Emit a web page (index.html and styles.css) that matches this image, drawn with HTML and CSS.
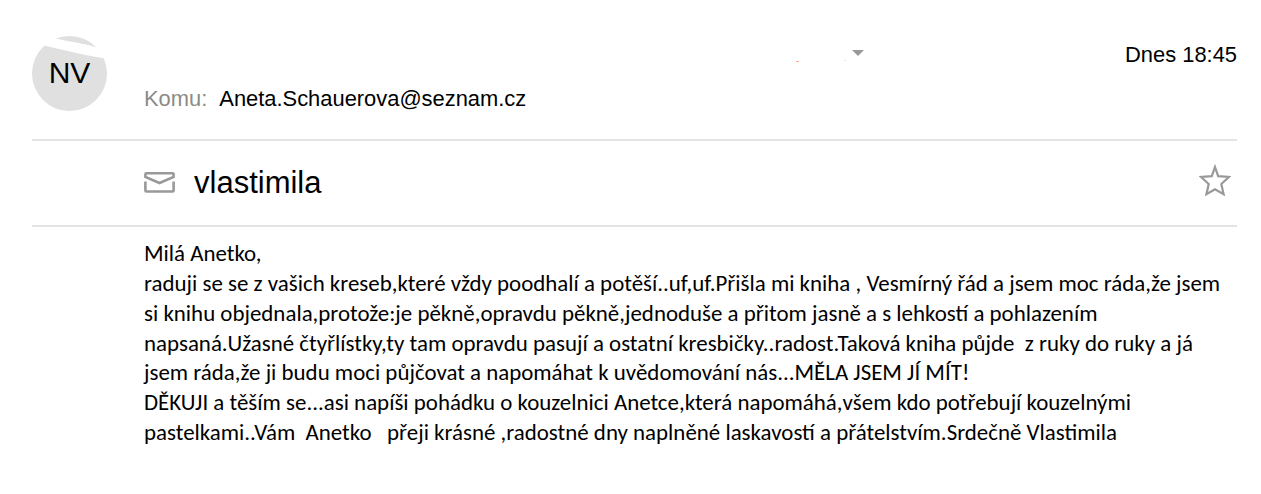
FILE: index.html
```html
<!DOCTYPE html>
<html lang="cs">
<head>
    <meta charset="UTF-8">
    <meta name="viewport" content="width=device-width, initial-scale=1.0">
    <title>vlastimila</title>
    <link rel="stylesheet" href="styles.css">
</head>
<body>
    <div class="message">
        <header class="message-header">
            <div class="avatar">
                <svg class="avatar-bg" viewBox="0 0 75 75">
                    <circle cx="37.5" cy="37.5" r="37.5" fill="#e0e0e0"/>
                    <path d="M12 9.5L20 0L24 2.5Q34 5 44 6.5T64 11L80 14L74 22.5Q55 19.5 40 16T12 9.5Z" fill="#fff"/>
                </svg>
                <span class="avatar-text">NV</span>
            </div>
            <div class="header-info">
                <div class="sender-row">
                    <svg class="sender-toggle" viewBox="0 0 68 14">
                        <path d="M56 0h12l-6 6z" fill="#999"/>
                        <path d="M0 11h3v1H0z" fill="#f9b095"/>
                        <path d="M48 10h2v1h-2z" fill="#fbdcdc"/>
                    </svg>
                    <span class="date">Dnes 18:45</span>
                </div>
                <div class="recipient-row">
                    <span class="label">Komu:</span>
                    <span class="email">Aneta.Schauerova@seznam.cz</span>
                </div>
            </div>
        </header>
        <div class="subject-row">
            <svg class="icon-mail" viewBox="0 0 31 22">
                <path d="M1.4 5V2.3q0-1 1-1h26.2q1 0 1 1V5L15.5 11L1.4 5Z" fill="none" stroke="#999" stroke-width="2.6"/>
                <path d="M1.4 9.5v9q0 1 1 1h26.2q1 0 1-1v-9" fill="none" stroke="#999" stroke-width="2.6"/>
            </svg>
            <h1 class="subject">vlastimila</h1>
            <svg class="icon-star" viewBox="0 0 32 32">
                <path d="M16 3L19.2 12.2L29.8 13L22.3 20L24.6 30.2L16 25.3L7.4 30.2L9.7 20L2.2 13L12.8 12.2Z" fill="none" stroke="#999" stroke-width="2.2"/>
            </svg>
        </div>
        <div class="message-body">
            <div class="line">Milá Anetko,</div>
            <div class="line">raduji se se z vašich kreseb,které vždy poodhalí a potěší..uf,uf.Přišla mi kniha , Vesmírný řád a jsem moc ráda,že jsem</div>
            <div class="line">si knihu objednala,protože:je pěkně,opravdu pěkně,jednoduše a přitom jasně a s lehkostí a pohlazením</div>
            <div class="line">napsaná.Užasné čtyřlístky,ty tam opravdu pasují a ostatní kresbičky..radost.Taková kniha půjde  z ruky do ruky a já</div>
            <div class="line">jsem ráda,že ji budu moci půjčovat a napomáhat k uvědomování nás...MĚLA JSEM JÍ MÍT!</div>
            <div class="line">DĚKUJI a těším se...asi napíši pohádku o kouzelnici Anetce,která napomáhá,všem kdo potřebují kouzelnými</div>
            <div class="line">pastelkami..Vám  Anetko   přeji krásné ,radostné dny naplněné laskavostí a přátelstvím.Srdečně Vlastimila</div>
        </div>
    </div>
</body>
</html>
```
FILE: styles.css
```css
body {
    margin: 0;
    background-color: #fff;
    color: #000;
    font-family: "Liberation Sans", Arial, sans-serif;
    font-size: 21.9px;
}
.message {
    padding: 0 24px 0 32px;
}
.message-header {
    display: flex;
    gap: 37px;
    height: 139px;
    border-bottom: 2px solid #e4e4e4;
}
.avatar {
    display: grid;
    place-items: center;
    width: 75px;
    height: 75px;
    margin-top: 36px;
}
.avatar-bg {
    grid-area: 1 / 1;
    width: 75px;
    height: 75px;
}
.avatar-text {
    grid-area: 1 / 1;
    margin-bottom: 2px;
    font-size: 30px;
}
.header-info {
    flex: 1;
    padding-top: 42px;
}
.sender-row {
    display: flex;
    justify-content: space-between;
    line-height: 26px;
    margin-bottom: 18px;
}
.sender-toggle {
    width: 68px;
    height: 14px;
    margin: 8px 0 0 652px;
}
.recipient-row {
    display: flex;
    gap: 12px;
    line-height: 26px;
}
.label {
    color: #8b8b85;
}
.subject-row {
    display: flex;
    align-items: center;
    height: 84px;
    padding: 0 6px 0 112px;
    border-bottom: 2px solid #e4e4e4;
}
.icon-mail {
    width: 31px;
    height: 22px;
}
.subject {
    flex: 1;
    margin: 0 0 0 19px;
    font-size: 31px;
    font-weight: normal;
}
.icon-star {
    width: 32px;
    height: 32px;
    margin-bottom: 6px;
}
.message-body {
    padding: 12.3px 0 0 112px;
    font-family: Carlito, Calibri, Lato, sans-serif;
    font-size: 22.92px;
    line-height: 29.8px;
}
.line {
    white-space: pre;
}
```
